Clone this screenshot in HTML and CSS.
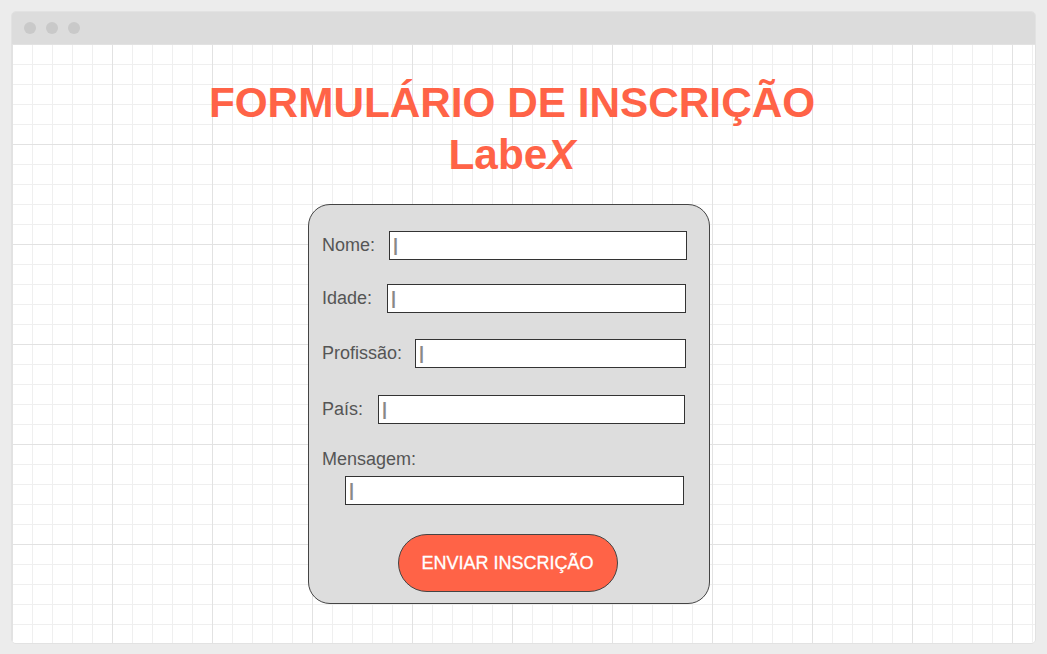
FILE: index.html
```html
<!DOCTYPE html>
<html lang="pt">
<head>
<meta charset="utf-8">
<title>Formulário de Inscrição LabeX</title>
<link rel="stylesheet" href="styles.css">
</head>
<body>
<div class="window">
  <div class="titlebar">
    <span class="dot"></span><span class="dot"></span><span class="dot"></span>
  </div>
  <div class="canvas">
    <h1 class="title">FORMULÁRIO DE INSCRIÇÃO<br>Labe<em>X</em></h1>
    <form class="card">
      <div class="row row-nome"><label>Nome:</label><input type="text" placeholder="|"></div>
      <div class="row row-idade"><label>Idade:</label><input type="text" placeholder="|"></div>
      <div class="row row-prof"><label>Profissão:</label><input type="text" placeholder="|"></div>
      <div class="row row-pais"><label>País:</label><input type="text" placeholder="|"></div>
      <div class="msg">
        <label>Mensagem:</label>
        <input type="text" placeholder="|">
      </div>
      <div class="actions"><button type="button" class="btn">ENVIAR INSCRIÇÃO</button></div>
    </form>
  </div>
</div>
</body>
</html>
```

FILE: styles.css
```css
html, body {
  margin: 0;
  padding: 0;
}
body {
  background: #ececec;
  font-family: "Liberation Sans", Arial, sans-serif;
  width: 1047px;
  height: 654px;
  overflow: hidden;
}
.window {
  margin: 11px;
  width: 1025px;
  height: 633px;
  box-sizing: border-box;
  border: 1px solid #e2e2e2;
  border-radius: 5px;
  overflow: hidden;
  display: flex;
  flex-direction: column;
}
.titlebar {
  height: 32px;
  flex: none;
  background: #dcdcdc;
  display: flex;
  align-items: center;
  gap: 10px;
  padding-left: 12px;
}
.dot {
  width: 12px;
  height: 12px;
  border-radius: 50%;
  background: #c9c9c9;
}
.canvas {
  flex: 1;
  background-color: #fff;
  background-image:
    linear-gradient(#e2e2e2 1px, transparent 1px),
    linear-gradient(90deg, #e2e2e2 1px, transparent 1px),
    linear-gradient(#efefef 1px, transparent 1px),
    linear-gradient(90deg, #efefef 1px, transparent 1px);
  background-size: 100px 100px, 100px 100px, 20px 20px, 20px 20px;
  display: flex;
  flex-direction: column;
  align-items: center;
  padding-right: 29px;
}
.title {
  margin: 33px 0 0 6px;
  font-size: 42.3px;
  line-height: 52px;
  font-weight: bold;
  color: #ff6347;
  text-align: center;
}
.title em {
  font-style: italic;
}
.card {
  margin-top: 23px;
  width: 402px;
  box-sizing: border-box;
  background: #dddddd;
  border: 1px solid #444;
  border-radius: 22px;
  padding: 26px 22px 11px 13px;
  display: flex;
  flex-direction: column;
}
.row {
  display: flex;
  align-items: center;
  height: 29px;
}
label {
  font-size: 18px;
  color: #555;
}
input {
  flex: 1;
  height: 29px;
  box-sizing: border-box;
  border: 1px solid #333;
  background: #fff;
  margin: 0;
  padding: 0 3px;
  font-family: "Liberation Sans", Arial, sans-serif;
  font-size: 18px;
}
input::placeholder {
  color: #888;
  font-weight: bold;
}
.row-nome label { margin-right: 14px; }
.row-idade { margin-top: 24px; margin-right: 1px; }
.row-idade label { margin-right: 15px; }
.row-prof { margin-top: 26px; margin-right: 1px; }
.row-prof label { margin-right: 13px; }
.row-pais { margin-top: 27px; margin-right: 2px; }
.row-pais label { margin-right: 15px; }
.msg {
  margin-top: 25px;
  display: flex;
  flex-direction: column;
  align-items: stretch;
}
.msg input {
  flex: none;
  margin: 6px 3px 0 23px;
}
.actions {
  display: flex;
  justify-content: center;
  margin-top: 29px;
  padding-left: 6px;
}
.btn {
  width: 220px;
  height: 58px;
  border-radius: 29px;
  background: #ff6347;
  border: 1px solid #444;
  color: #fff;
  font-family: "Liberation Sans", Arial, sans-serif;
  font-size: 18px;
  -webkit-text-stroke: 0.3px #fff;
}
```
